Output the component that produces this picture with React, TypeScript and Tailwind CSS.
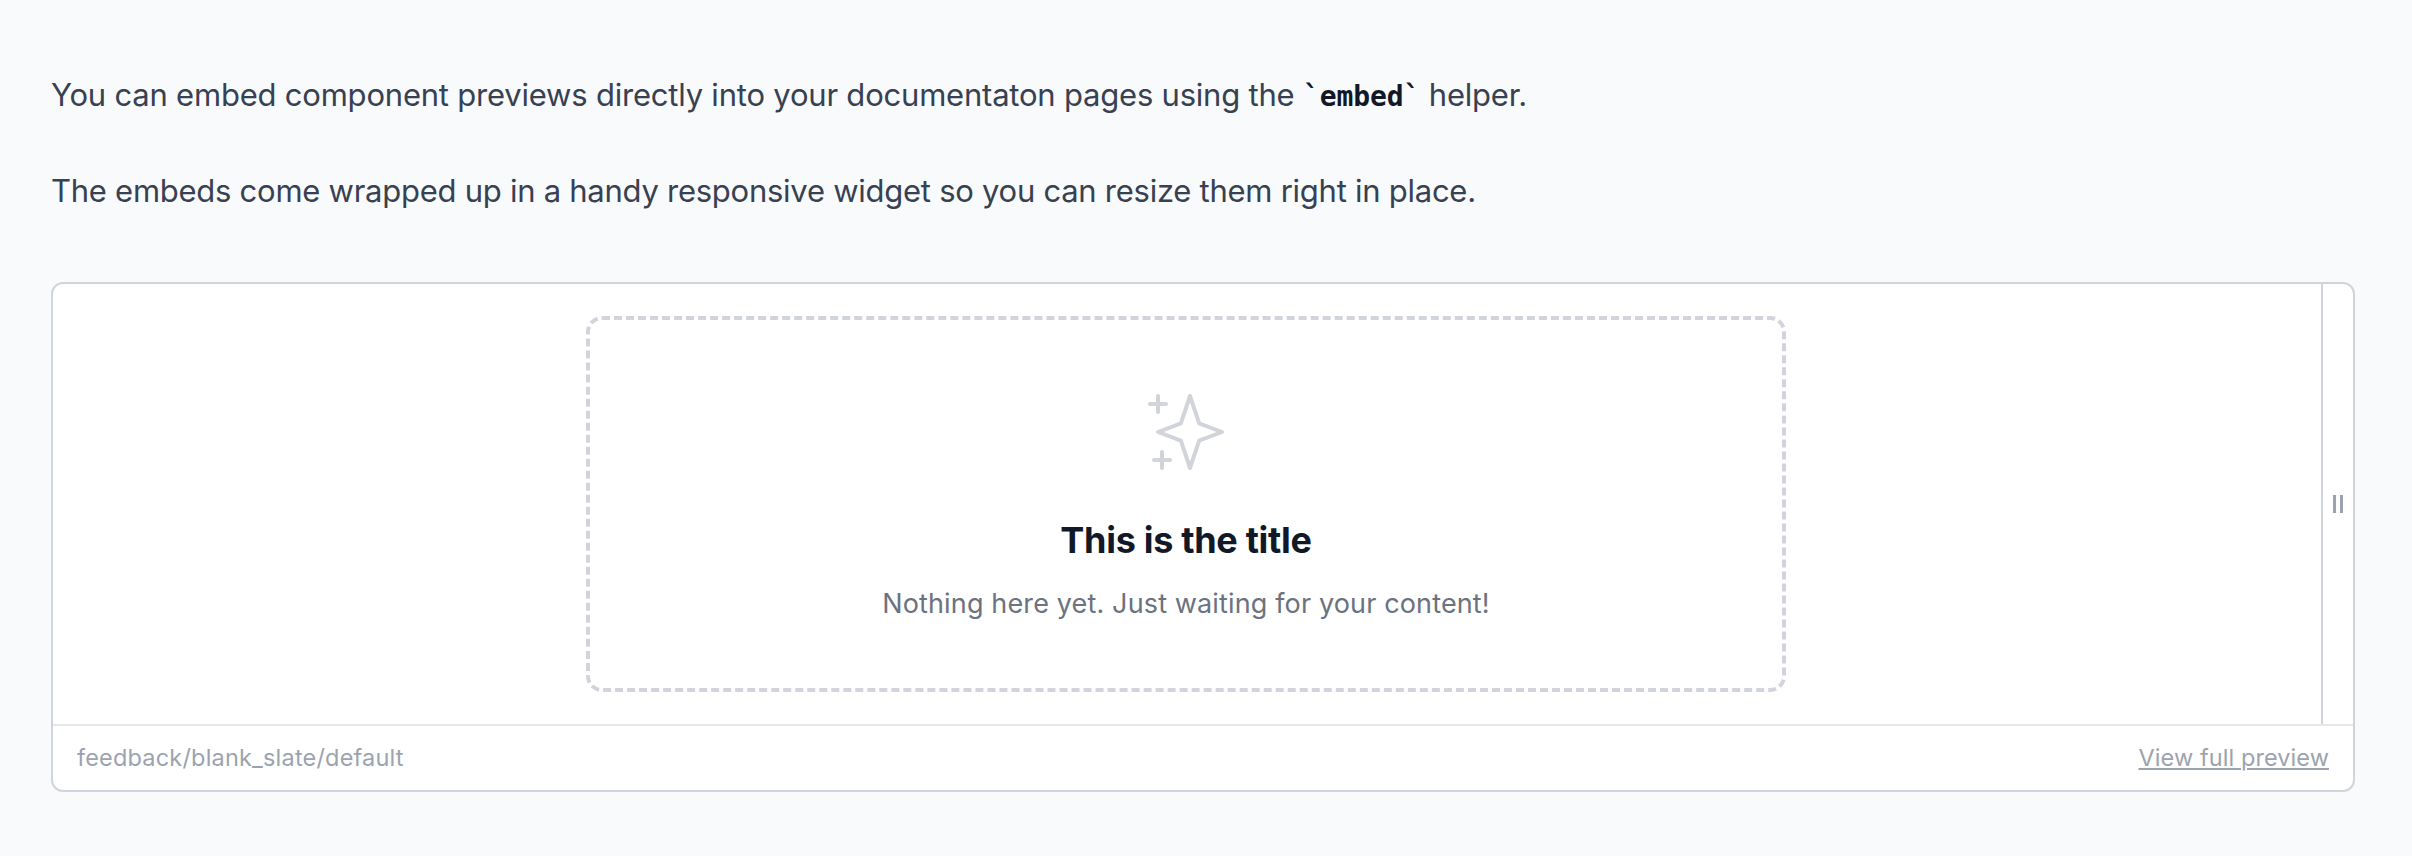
function SparklesIcon() {
  return (
    <svg className="size-24 text-[#d1d5db]" viewBox="0 0 24 24" fill="none" stroke="currentColor" strokeWidth="1" strokeLinecap="round" strokeLinejoin="round" aria-hidden="true">
      <path d="M5 3v4M3 5h4M6 17v4m-2-2h4m5-16l2.286 6.857L21 12l-5.714 2.143L13 21l-2.286-6.857L5 12l5.714-2.143L13 3z" />
    </svg>
  );
}

function BlankSlate() {
  return (
    <div className="flex h-[376px] w-[1200px] flex-col items-center rounded-2xl border-4 border-dashed border-[#d1d5db] pt-16">
      <SparklesIcon />
      <h3 className="mt-9 text-[36px] leading-[48px] font-bold tracking-[-0.3px] whitespace-nowrap text-[#111827]">This is the title</h3>
      <p className="mt-4 text-[27px] leading-[48px] tracking-[0.14px] whitespace-nowrap text-[#6b7280]">
        Nothing here yet. Just waiting for your content!
      </p>
    </div>
  );
}

function ResizeHandle() {
  return (
    <div className="flex w-[32px] cursor-ew-resize items-center justify-center gap-1 border-l-2 border-[#d1d5db]">
      <span className="h-[18px] w-[3px] bg-[#9ca3af]" />
      <span className="h-[18px] w-[3px] bg-[#9ca3af]" />
    </div>
  );
}

function Embed() {
  return (
    <section className="mt-[59px] flex h-[510px] w-[2304px] flex-col overflow-hidden rounded-xl border-2 border-[#d1d5db] bg-white">
      <div className="flex h-[440px] shrink-0">
        <div className="w-[2268px] pt-8 pl-[533px]">
          <BlankSlate />
        </div>
        <ResizeHandle />
      </div>
      <footer className="flex flex-1 items-center justify-between border-t-2 border-[#e5e7eb] px-6 text-[23.5px] leading-8 whitespace-nowrap text-[#9ca3af]">
        <span className="tracking-[0.19px]">feedback/blank_slate/default</span>
        <a href="#" className="tracking-[0.08px] underline decoration-2 underline-offset-2">View full preview</a>
      </footer>
    </section>
  );
}

export default function App() {
  return (
    <main className="h-[856px] overflow-hidden bg-[#f9fafc] pt-[63px] pl-[51px] font-['Inter',sans-serif]">
      <div className="text-[31px] leading-[64px] whitespace-nowrap text-[#374151]">
        <p className="tracking-[-0.21px]">
          You can embed component previews directly into your documentaton pages using the{" "}
          <code className="font-['DejaVu_Sans_Mono',monospace] text-[28px] leading-none font-bold tracking-[-0.1px] text-[#111827]">`embed`</code>{" "}
          helper.
        </p>
        <p className="mt-8 tracking-[-0.26px]">
          The embeds come wrapped up in a handy responsive widget so you can resize them right in place.
        </p>
      </div>
      <Embed />
    </main>
  );
}
